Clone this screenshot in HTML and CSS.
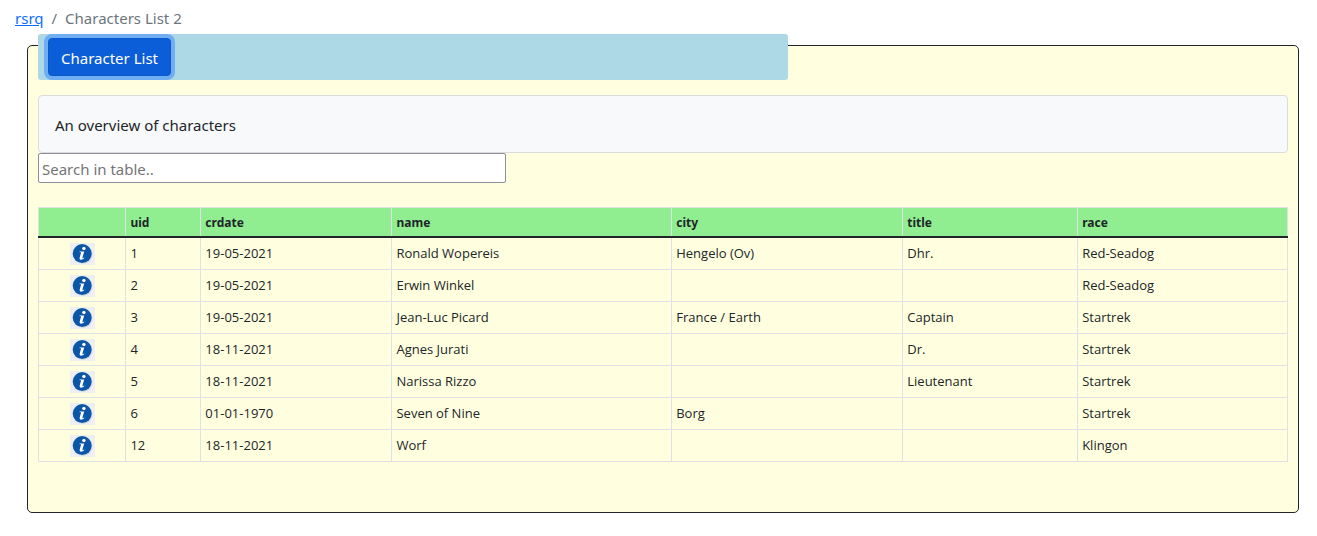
FILE: index.html
```html
<!DOCTYPE html>
<html lang="en">
<head>
<meta charset="utf-8">
<title>Characters List 2</title>
<link rel="stylesheet" href="styles.css">
</head>
<body>
<svg class="sprite" aria-hidden="true">
  <symbol id="info" viewBox="0 0 25 22">
    <rect width="25" height="22" fill="#efeff3"/>
    <circle cx="13" cy="11.4" r="9.6" fill="#d9dce6"/>
    <circle cx="12.2" cy="10.6" r="9.5" fill="#0c56a8"/>
    <circle cx="13.9" cy="5.4" r="1.7" fill="#fff"/>
    <path d="M9.6 8.4H14.2L12.4 14.8Q12.2 15.8 14.2 14.4L14.4 15Q12.6 17 10.8 16.8Q9.2 16.4 9.7 14.6L11.1 9.6Q11.2 9.1 9.5 9.1Z" fill="#fff"/>
  </symbol>
</svg>
<nav class="breadcrumb" aria-label="Breadcrumb">
  <a href="#">rsrq</a>
  <span>/</span>
  <span>Characters List 2</span>
</nav>
<main class="panel">
  <div class="toolbar">
    <button class="btn" type="button">Character List</button>
  </div>
  <div class="card">An overview of characters</div>
  <input class="search" type="text" placeholder="Search in table.." aria-label="Search in table">
  <table class="list">
    <colgroup>
      <col class="c-info"><col class="c-uid"><col class="c-date"><col class="c-name"><col class="c-city"><col class="c-title"><col class="c-race">
    </colgroup>
    <thead>
      <tr><th></th><th>uid</th><th>crdate</th><th>name</th><th>city</th><th>title</th><th>race</th></tr>
    </thead>
    <tbody>
      <tr><td><a class="info" href="#" aria-label="Info"><svg><use href="#info"/></svg></a></td><td>1</td><td>19-05-2021</td><td>Ronald Wopereis</td><td>Hengelo (Ov)</td><td>Dhr.</td><td>Red-Seadog</td></tr>
      <tr><td><a class="info" href="#" aria-label="Info"><svg><use href="#info"/></svg></a></td><td>2</td><td>19-05-2021</td><td>Erwin Winkel</td><td></td><td></td><td>Red-Seadog</td></tr>
      <tr><td><a class="info" href="#" aria-label="Info"><svg><use href="#info"/></svg></a></td><td>3</td><td>19-05-2021</td><td>Jean-Luc Picard</td><td>France / Earth</td><td>Captain</td><td>Startrek</td></tr>
      <tr><td><a class="info" href="#" aria-label="Info"><svg><use href="#info"/></svg></a></td><td>4</td><td>18-11-2021</td><td>Agnes Jurati</td><td></td><td>Dr.</td><td>Startrek</td></tr>
      <tr><td><a class="info" href="#" aria-label="Info"><svg><use href="#info"/></svg></a></td><td>5</td><td>18-11-2021</td><td>Narissa Rizzo</td><td></td><td>Lieutenant</td><td>Startrek</td></tr>
      <tr><td><a class="info" href="#" aria-label="Info"><svg><use href="#info"/></svg></a></td><td>6</td><td>01-01-1970</td><td>Seven of Nine</td><td>Borg</td><td></td><td>Startrek</td></tr>
      <tr><td><a class="info" href="#" aria-label="Info"><svg><use href="#info"/></svg></a></td><td>12</td><td>18-11-2021</td><td>Worf</td><td></td><td></td><td>Klingon</td></tr>
    </tbody>
  </table>
</main>
</body>
</html>
```
FILE: styles.css
```css
* { box-sizing: border-box; }
body {
  margin: 0;
  background: #fff;
  color: #212529;
  font: 15px/24px "Noto Sans", sans-serif;
}
.sprite { display: none; }
.breadcrumb {
  display: flex;
  gap: 8px;
  padding: 6px 15px 15px;
  color: #6c757d;
}
.breadcrumb a { color: #0d6efd; }
.panel {
  display: flex;
  flex-direction: column;
  align-items: flex-start;
  margin: 0 18px 0 27px;
  padding: 0 10px 50px;
  background: #ffffe0;
  border: 1px solid #212529;
  border-radius: 5px;
}
.toolbar {
  width: 60%;
  margin: -12px 0 15px;
  padding: 4px 10px;
  background: #add8e6;
  border-radius: 3px;
}
.btn {
  display: block;
  padding: 7px 12px 5px;
  border: 1px solid #0a58ca;
  border-radius: 4px;
  background: #0b5ed7;
  box-shadow: 0 0 0 4px rgba(49, 132, 253, 0.5);
  color: #fff;
  font: inherit;
}
.card {
  width: 100%;
  padding: 17px 16px 15px;
  background: #f8f9fa;
  border: 1px solid #dadbde;
  border-radius: 4px;
}
.search {
  width: 468px;
  max-width: 100%;
  height: 30px;
  margin-bottom: 24px;
  padding: 2px 3px 0;
  border: 1px solid #8f8f9d;
  border-radius: 2px;
  background: #fff;
  font: inherit;
}
.search::placeholder { color: #757575; }
.list {
  width: 100%;
  table-layout: fixed;
  border-collapse: collapse;
  font-size: 12px;
  line-height: 20px;
}
.list th, .list td {
  padding: 5px 4px 3px;
  border: 1px solid #dee2e6;
  text-align: left;
  vertical-align: top;
}
.list th { background: #90ee90; }
.list thead th { border-bottom: 2px solid #212529; }
.list td {
  height: 32px;
  font-family: "Open Sans", "Noto Sans", sans-serif;
  font-size: 13px;
}
.c-info { width: 7%; }
.c-uid { width: 6%; }
.c-date { width: 15.3%; }
.c-name { width: 22.4%; }
.c-city { width: 18.5%; }
.c-title { width: 14%; }
.c-race { width: 16.8%; }
.info, .info svg { display: block; }
.info svg { width: 25px; height: 22px; margin: 0 auto; }
```
